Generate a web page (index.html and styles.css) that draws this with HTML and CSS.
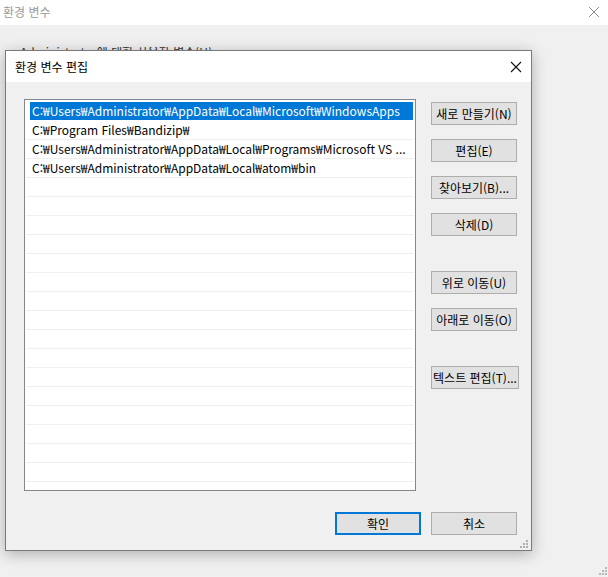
FILE: index.html
```html
<!DOCTYPE html>
<html lang="ko">
<head>
<meta charset="utf-8">
<title>환경 변수</title>
<link rel="stylesheet" href="styles.css">
</head>
<body>
<div class="outer">
  <div class="outer-title">
    <span class="outer-title-text">환경 변수</span>
    <svg class="outer-close" width="12" height="12" viewBox="0 0 12 12"><path d="M1 1 L11 11 M11 1 L1 11" stroke="#8a8a8a" stroke-width="1" fill="none"/></svg>
  </div>
  <div class="outer-body">
    <div class="hidden-clip"><div class="hidden-label">Administrator에 대한 사용자 변수(U)</div></div>
  </div>
  <svg class="grip outer-grip" width="8" height="8" viewBox="0 0 8 8"><g fill="#b8b8b8"><rect x="6" y="0" width="2" height="2"/><rect x="3" y="3" width="2" height="2"/><rect x="6" y="3" width="2" height="2"/><rect x="0" y="6" width="2" height="2"/><rect x="3" y="6" width="2" height="2"/><rect x="6" y="6" width="2" height="2"/></g></svg>
</div>

<div class="dialog">
  <div class="titlebar">
    <span class="title">환경 변수 편집</span>
    <svg class="close" width="12" height="12" viewBox="0 0 12 12"><path d="M1 1 L11 11 M11 1 L1 11" stroke="#111" stroke-width="1.1" fill="none"/></svg>
  </div>
  <div class="body">
    <div class="main">
      <div class="list">
        <div class="row selected"><span class="cell">C:₩Users₩Administrator₩AppData₩Local₩Microsoft₩WindowsApps</span></div>
        <div class="row"><span class="cell">C:₩Program Files₩Bandizip₩</span></div>
        <div class="row"><span class="cell">C:₩Users₩Administrator₩AppData₩Local₩Programs₩Microsoft VS ...</span></div>
        <div class="row"><span class="cell">C:₩Users₩Administrator₩AppData₩Local₩atom₩bin</span></div>
        <div class="row"></div><div class="row"></div><div class="row"></div><div class="row"></div>
        <div class="row"></div><div class="row"></div><div class="row"></div><div class="row"></div>
        <div class="row"></div><div class="row"></div><div class="row"></div><div class="row"></div>
        <div class="row"></div><div class="row"></div><div class="row"></div><div class="row"></div>
        <div class="row"></div>
      </div>
      <div class="side">
        <div class="group">
          <button class="btn">새로 만들기(N)</button>
          <button class="btn">편집(E)</button>
          <button class="btn">찾아보기(B)...</button>
          <button class="btn">삭제(D)</button>
        </div>
        <div class="group">
          <button class="btn">위로 이동(U)</button>
          <button class="btn">아래로 이동(O)</button>
        </div>
        <div class="group">
          <button class="btn wide">텍스트 편집(T)...</button>
        </div>
      </div>
    </div>
    <div class="footer">
      <button class="btn primary">확인</button>
      <button class="btn">취소</button>
    </div>
  </div>
  <svg class="grip dialog-grip" width="8" height="8" viewBox="0 0 8 8"><g fill="#b0b0b0"><rect x="6" y="0" width="2" height="2"/><rect x="3" y="3" width="2" height="2"/><rect x="6" y="3" width="2" height="2"/><rect x="0" y="6" width="2" height="2"/><rect x="3" y="6" width="2" height="2"/><rect x="6" y="6" width="2" height="2"/></g></svg>
</div>
</body>
</html>
```

FILE: styles.css
```css
* { box-sizing: border-box; }
html, body {
  margin: 0;
  padding: 0;
  width: 608px;
  height: 577px;
  overflow: hidden;
  background: #f0f0f0;
  font-family: "Noto Sans CJK KR", "Noto Sans", sans-serif;
  font-size: 12px;
  color: #000;
}
.outer {
  position: relative;
  width: 608px;
  height: 577px;
  display: flex;
  flex-direction: column;
}
.outer-title {
  height: 25px;
  background: #fff;
  display: flex;
  align-items: center;
  justify-content: space-between;
  padding: 0 8px 1px 3px;
}
.outer-title-text {
  color: #999;
  font-size: 12px;
  line-height: 14px;
}
.outer-close { display: block; }
.outer-body {
  flex: 1;
  background: #f0f0f0;
  padding: 22px 0 0 20px;
}
.hidden-clip {
  height: 3px;
  overflow: hidden;
}
.hidden-label {
  color: #333;
  font-size: 12px;
  line-height: 14px;
  margin-top: -2px;
}
.grip { position: absolute; display: block; }
.outer-grip { right: 1px; bottom: 2px; }

.dialog {
  position: absolute;
  left: 5px;
  top: 50px;
  width: 527px;
  height: 501px;
  background: #f0f0f0;
  border: 1px solid #7a7a7a;
  box-shadow: 0 3px 14px rgba(0,0,0,0.28);
  display: flex;
  flex-direction: column;
}
.titlebar {
  height: 31px;
  background: #fff;
  display: flex;
  align-items: center;
  justify-content: space-between;
  padding: 0 9px 0 9px;
}
.title { font-size: 12px; line-height: 14px; }
.close { display: block; }
.body {
  flex: 1;
  padding: 17px 14px 0 18px;
  display: flex;
  flex-direction: column;
}
.main { display: flex; }
.list {
  flex: 0 0 392px;
  width: 392px;
  height: 392px;
  background: #fff;
  border: 1px solid #828790;
  padding: 2px 1px 0 1px;
  overflow: hidden;
}
.row {
  height: 19px;
  border-bottom: 1px solid #efefef;
  display: flex;
}
.cell {
  flex: 1;
  margin-left: 4px;
  margin-right: 1px;
  padding-left: 2px;
  line-height: 18px;
  white-space: nowrap;
  overflow: hidden;
}
.row.selected { border-bottom-color: #fff; }
.row.selected .cell { background: #0078d7; color: #fff; }

.side {
  flex: 0 0 86px;
  width: 86px;
  margin-left: 15px;
  padding-top: 3px;
  display: flex;
  flex-direction: column;
  gap: 35px;
}
.group { display: flex; flex-direction: column; align-items: flex-start; gap: 14px; }
.btn {
  flex: 0 0 auto;
  width: 86px;
  height: 23px;
  padding: 0;
  margin: 0;
  background: #e1e1e1;
  border: 1px solid #adadad;
  font-family: "Noto Sans CJK KR", "Noto Sans", sans-serif;
  font-size: 12px;
  line-height: 14px;
  color: #000;
  white-space: nowrap;
}
.btn.wide { width: 88px; }
.footer {
  display: flex;
  justify-content: flex-end;
  gap: 10px;
  margin-top: 21px;
}
.btn.primary { border: 2px solid #0078d7; }
.dialog-grip { right: 3px; bottom: 2px; }
```
